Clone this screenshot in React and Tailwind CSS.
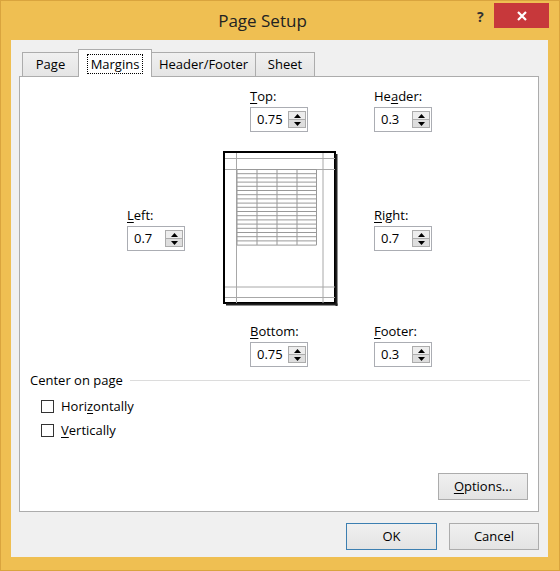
import React from 'react';

const font = { fontFamily: '"Open Sans", "Noto Sans", "Liberation Sans", sans-serif' };

function Arrow({ up }) {
  return (
    <svg width="7" height="4" viewBox="0 0 7 4" className="block">
      {up ? <polygon points="0,4 7,4 3.5,0" fill="#000" /> : <polygon points="0,0 7,0 3.5,4" fill="#000" />}
    </svg>
  );
}

function Spinner({ value }) {
  return (
    <div className="flex h-[25px] w-[58px] items-center border border-[#ABADB3] bg-white pl-[6px] pr-px">
      <span className="flex-1 text-[13px] leading-none text-black">{value}</span>
      <div className="flex h-[17px] w-[18px] flex-col border border-[#ACACAC]">
        <div className="flex flex-1 items-center justify-center border-b border-[#ACACAC] bg-[#EDEDED]">
          <Arrow up />
        </div>
        <div className="flex flex-1 items-center justify-center bg-[#DEDEDE]">
          <Arrow />
        </div>
      </div>
    </div>
  );
}

function Field({ label, u, value }) {
  const i = label.indexOf(u);
  return (
    <div className="flex w-[58px] flex-col">
      <div className="mb-[3px] h-[16px] whitespace-nowrap text-[13px] leading-[16px] text-black">
        {label.slice(0, i)}
        <span className="underline underline-offset-2">{u}</span>
        {label.slice(i + 1)}
      </div>
      <Spinner value={value} />
    </div>
  );
}

function Preview() {
  const rows = [];
  for (let k = 0; k <= 18; k++) {
    const y = 18.5 + k * 4.2;
    rows.push(<line key={k} x1="14" y1={y} x2="93.5" y2={y} stroke="#999" strokeWidth="1" />);
  }
  const cols = [14, 34, 54, 74, 93.5].map((x) => (
    <line key={x} x1={x} y1="18.5" x2={x} y2="94" stroke="#999" strokeWidth="1" />
  ));
  return (
    <svg width="116" height="156" viewBox="0 0 116 156" className="block">
      <rect x="1" y="1" width="111" height="151" fill="#fff" stroke="#000" strokeWidth="2" />
      <line x1="113.5" y1="3" x2="113.5" y2="155" stroke="#222" strokeWidth="2" />
      <line x1="3" y1="153.5" x2="114.5" y2="153.5" stroke="#222" strokeWidth="2" />
      <line x1="13.5" y1="2" x2="13.5" y2="152" stroke="#A8A8A8" />
      <line x1="100" y1="2" x2="100" y2="152" stroke="#A8A8A8" />
      <line x1="2" y1="7.5" x2="112" y2="7.5" stroke="#A8A8A8" />
      <line x1="2" y1="18.5" x2="112" y2="18.5" stroke="#A8A8A8" />
      <line x1="2" y1="136" x2="112" y2="136" stroke="#A8A8A8" />
      <line x1="2" y1="146.5" x2="112" y2="146.5" stroke="#A8A8A8" />
      {rows}
      {cols}
    </svg>
  );
}

function Check({ label, u }) {
  const i = label.indexOf(u);
  return (
    <div className="flex h-[24px] items-center">
      <div className="h-[13px] w-[13px] border border-[#333] bg-white" />
      <span className="ml-[7px] text-[13px] leading-none text-black">
        {label.slice(0, i)}
        <span className="underline underline-offset-2">{u}</span>
        {label.slice(i + 1)}
      </span>
    </div>
  );
}

const btn =
  'flex h-[27px] items-center justify-center border bg-gradient-to-b from-[#F0F0F0] to-[#E3E3E3] text-[13px] text-black';

export default function App() {
  return (
    <div
      className="relative flex h-[571px] w-[560px] flex-col overflow-hidden border border-[#D9A43E] bg-[#EFBF52] pb-[13px] pl-[10px] pr-[11px]"
      style={font}
    >
      <div className="relative h-[39px] shrink-0">
        <div className="flex h-full items-center justify-center pr-[34px] text-[17px] text-[#222]">Page Setup</div>
        <span className="absolute left-[466px] top-[5px] text-[14px] font-bold text-[#333]">?</span>
        <div className="absolute left-[483px] top-[2px] flex h-[25px] w-[55px] items-center justify-center bg-[#C7383B]">
          <svg width="10" height="10" viewBox="0 0 10 10">
            <path d="M1 1 L9 9 M9 1 L1 9" stroke="#fff" strokeWidth="2.2" />
          </svg>
        </div>
      </div>

      <div className="flex flex-1 flex-col bg-[#F0F0F0] pl-[8px] pr-[9px] pt-[9px]">
        <div className="relative z-10 -mb-px flex h-[28px] items-end pl-[3px]">
          <div className="mb-px flex h-[24px] w-[57px] items-center justify-center border border-b-0 border-[#ACACAC] bg-gradient-to-b from-[#F0F0F0] to-[#E5E5E5] text-[13px] text-black">
            Page
          </div>
          <div className="-ml-px flex h-[28px] w-[74px] items-center justify-center border border-b-0 border-[#ACACAC] bg-white text-[13px] text-black">
            <span className="border border-dotted border-black px-[3px] leading-[18px]">Margins</span>
          </div>
          <div className="-ml-px mb-px flex h-[24px] w-[105px] items-center justify-center border border-b-0 border-[#ACACAC] bg-gradient-to-b from-[#F0F0F0] to-[#E5E5E5] text-[13px] text-black">
            Header/Footer
          </div>
          <div className="-ml-px mb-px flex h-[24px] w-[60px] items-center justify-center border border-b-0 border-[#ACACAC] bg-gradient-to-b from-[#F0F0F0] to-[#E5E5E5] text-[13px] text-black">
            Sheet
          </div>
        </div>

        <div className="flex h-[436px] flex-col border border-[#ACACAC] bg-white pt-[11px]">
          <div className="flex pl-[230px]">
            <Field label="Top:" u="T" value="0.75" />
            <div className="ml-[66px]">
              <Field label="Header:" u="a" value="0.3" />
            </div>
          </div>

          <div className="mt-[19px] flex items-center pl-[107px]">
            <Field label="Left:" u="L" value="0.7" />
            <div className="ml-[38px]">
              <Preview />
            </div>
            <div className="ml-[35px]">
              <Field label="Right:" u="R" value="0.7" />
            </div>
          </div>

          <div className="mt-[16px] flex pl-[230px]">
            <Field label="Bottom:" u="B" value="0.75" />
            <div className="ml-[66px]">
              <Field label="Footer:" u="F" value="0.3" />
            </div>
          </div>

          <div className="mt-[5px] flex h-[16px] items-center pl-[10px] pr-[8px]">
            <span className="text-[13px] leading-[16px] text-black">Center on page</span>
            <div className="ml-[7px] h-px flex-1 bg-[#DCDCDC]" />
          </div>
          <div className="mt-[6px] pl-[21px]">
            <Check label="Horizontally" u="z" />
            <Check label="Vertically" u="V" />
          </div>

          <div className="mb-[11px] mr-[10px] mt-auto flex justify-end">
            <div className={`${btn} h-[26px] w-[90px] border-[#ACACAC]`}>
              <span className="underline underline-offset-2">O</span>ptions...
            </div>
          </div>
        </div>

        <div className="mt-[11px] flex justify-end gap-[12px]">
          <div className={`${btn} w-[91px] border-[#3C7FB1]`}>OK</div>
          <div className={`${btn} w-[90px] border-[#ACACAC]`}>Cancel</div>
        </div>
      </div>
    </div>
  );
}
